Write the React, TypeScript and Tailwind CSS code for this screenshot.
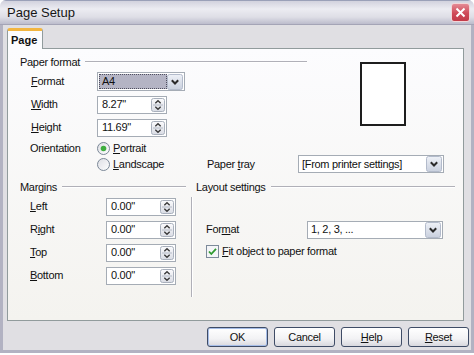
import React from "react";

const Spin = () => (
  <svg width="14" height="14" viewBox="0 0 14 14" className="shrink-0">
    <defs>
      <linearGradient id="spg" x1="0" y1="0" x2="0" y2="1">
        <stop offset="0" stopColor="#fbfbfd" />
        <stop offset="1" stopColor="#d9dce4" />
      </linearGradient>
    </defs>
    <rect x="0.5" y="0.5" width="13" height="13" rx="2" fill="url(#spg)" stroke="#a9b0bc" />
    <line x1="2" y1="7" x2="12" y2="7" stroke="#b4bac6" />
    <path d="M4.3 5.2 L7 2.8 L9.7 5.2" fill="none" stroke="#3a3a3a" strokeWidth="1.4" />
    <path d="M4.3 8.8 L7 11.2 L9.7 8.8" fill="none" stroke="#3a3a3a" strokeWidth="1.4" />
  </svg>
);

const Arrow = () => (
  <svg width="16" height="16" viewBox="0 0 16 16" className="shrink-0">
    <defs>
      <linearGradient id="arg" x1="0" y1="0" x2="0" y2="1">
        <stop offset="0" stopColor="#eef1f7" />
        <stop offset="1" stopColor="#c9d0de" />
      </linearGradient>
    </defs>
    <rect x="0.5" y="0.5" width="15" height="15" rx="2" fill="url(#arg)" stroke="#b3bbcb" />
    <path d="M4.8 6.3 L8 9.5 L11.2 6.3" fill="none" stroke="#2a2a2a" strokeWidth="2" />
  </svg>
);

const U = ({ children }: { children: React.ReactNode }) => <span className="underline underline-offset-[1px]">{children}</span>;

const Field = ({ value, w }: { value: string; w: string }) => (
  <div className={`${w} h-[18px] bg-white border border-[#a5acb5] flex items-center pl-[4px] pr-[1px]`}>
    <span className="flex-1">{value}</span>
    <Spin />
  </div>
);

const Combo = ({ value, w }: { value: string; w: string }) => (
  <div className={`${w} h-[18px] bg-white border border-[#a5acb5] flex items-center pl-[3px] pr-px`}>
    <span className="flex-1">{value}</span>
    <Arrow />
  </div>
);

const Header = ({ text }: { text: string }) => (
  <div className="h-[14px] flex items-center gap-[5px]">
    <span>{text}</span>
    <div className="flex-1 h-[2px] border-t border-[#b0b0b8] border-b border-b-white" />
  </div>
);

const Radio = ({ on }: { on?: boolean }) => (
  <svg width="13" height="13" viewBox="0 0 13 13" className="shrink-0">
    <defs>
      <linearGradient id="rdg" x1="0" y1="0" x2="1" y2="1">
        <stop offset="0" stopColor="#dcdde3" />
        <stop offset="1" stopColor="#ffffff" />
      </linearGradient>
    </defs>
    <circle cx="6.5" cy="6.5" r="6" fill="url(#rdg)" stroke="#7b8797" />
    {on && <circle cx="6.5" cy="6.5" r="2.8" fill="#3fae3f" />}
  </svg>
);

const Btn = ({ children, def }: { children: React.ReactNode; def?: boolean }) => (
  <div
    className={`w-[61px] h-[20px] rounded-[3px] border border-[#3f4c66] flex items-center justify-center bg-[linear-gradient(to_bottom,#ffffff_0%,#f2f2f4_60%,#d8d8de_100%)] ${
      def ? "shadow-[inset_0_0_0_1px_#a6bde8]" : ""
    }`}
  >
    {children}
  </div>
);

export default function App() {
  return (
    <div className="w-[474px] h-[355px] bg-white font-['Liberation_Sans',Arial,sans-serif] text-[11px] tracking-[-0.3px] text-[#111] leading-none">
      <div className="h-[353px] flex flex-col rounded-t-[6px] overflow-hidden">
        <div className="h-[25px] shrink-0 flex items-center justify-between pl-[7px] pr-[4px] border-t border-[#9aa0b8] border-b border-b-[#a4a4b6] bg-[linear-gradient(to_bottom,#d2d2de_0%,#ececf2_35%,#dedee6_70%,#bcbccc_100%)]">
          <span className="text-[13px] tracking-normal text-[#161616]">Page Setup</span>
          <div className="w-[19px] h-[19px] rounded-[3px] border border-[#f2d6d8] bg-[linear-gradient(to_bottom,#e48a94_0%,#cf4a58_55%,#c23a48_100%)] flex items-center justify-center">
            <svg width="11" height="11" viewBox="0 0 11 11">
              <path d="M1.5 1.5 L9.5 9.5 M9.5 1.5 L1.5 9.5" stroke="#fff" strokeWidth="2" />
            </svg>
          </div>
        </div>
        <div className="flex-1 flex flex-col bg-[#e0dfe3] border-x-[3px] border-b-[3px] border-[#b2b2c2]">
          <div className="pl-[4px] pt-[3px] flex">
            <div className="relative z-10 -mb-px w-[36px] h-[21px] bg-[#fcfcfe] border-x border-[#919b9c] rounded-t-[3px] border-t-[3px] border-t-[#f2b540] flex items-center pl-[3px] font-bold tracking-normal">
              Page
            </div>
          </div>
          <div className="ml-[4px] w-[457px] h-[273px] border border-[#919b9c] bg-[linear-gradient(to_bottom,#fcfcfe_0%,#f4f3ef_100%)] pl-[12px] pt-[6px] flex flex-col">
            <div className="flex">
              <div className="w-[287px] flex flex-col">
                <Header text="Paper format" />
                <div className="mt-px h-[23px] flex items-center">
                  <span className="w-[77px] pl-[11px]"><U>F</U>ormat</span>
                  <div className="w-[88px] h-[19px] bg-white border border-[#a5acb5] flex items-center p-px">
                    <div className="flex-1 h-full bg-[#b4b4c4] border border-dotted border-[#505060] flex items-center pl-[2px]">A4</div>
                    <Arrow />
                  </div>
                </div>
                <div className="h-[23px] flex items-center">
                  <span className="w-[77px] pl-[11px]"><U>W</U>idth</span>
                  <Field value={'8.27"'} w="w-[70px]" />
                </div>
                <div className="h-[23px] flex items-center">
                  <span className="w-[77px] pl-[11px]"><U>H</U>eight</span>
                  <Field value={'11.69"'} w="w-[70px]" />
                </div>
              </div>
              <div className="ml-[53px] mt-[7px] w-[46px] h-[64px] border-2 border-[#1e1e1e] bg-white" />
            </div>
            <div className="mt-px h-[16px] flex items-center">
              <span className="w-[77px] pl-[10px]">Orientation</span>
              <Radio on />
              <span className="ml-[3px]"><U>P</U>ortrait</span>
            </div>
            <div className="h-[16px] flex items-center">
              <span className="w-[77px]" />
              <div className="w-[110px] flex items-center">
                <Radio />
                <span className="ml-[3px]"><U>L</U>andscape</span>
              </div>
              <span className="w-[91px]">Paper <U>t</U>ray</span>
              <Combo value="[From printer settings]" w="w-[146px]" />
            </div>
            <div className="mt-[8px] flex">
              <div className="w-[166px] flex flex-col">
                <Header text="Margins" />
                <div className="mt-px h-[23px] flex items-center">
                  <span className="w-[86px] pl-[10px]"><U>L</U>eft</span>
                  <Field value={'0.00"'} w="w-[70px]" />
                </div>
                <div className="h-[23px] flex items-center">
                  <span className="w-[86px] pl-[10px]">R<U>i</U>ght</span>
                  <Field value={'0.00"'} w="w-[70px]" />
                </div>
                <div className="h-[23px] flex items-center">
                  <span className="w-[86px] pl-[10px]"><U>T</U>op</span>
                  <Field value={'0.00"'} w="w-[70px]" />
                </div>
                <div className="h-[23px] flex items-center">
                  <span className="w-[86px] pl-[10px]"><U>B</U>ottom</span>
                  <Field value={'0.00"'} w="w-[70px]" />
                </div>
              </div>
              <div className="ml-[5px] mt-[17px] w-[2px] h-[100px] border-l border-[#b0b0b8] border-r border-r-white" />
              <div className="ml-[3px] w-[259px] flex flex-col">
                <Header text="Layout settings" />
                <div className="mt-[24px] h-[23px] flex items-center">
                  <span className="w-[111px] pl-[10px]">For<U>m</U>at</span>
                  <Combo value="1, 2, 3, ..." w="w-[136px]" />
                </div>
                <div className="mt-[2px] h-[16px] flex items-center pl-[10px]">
                  <svg width="13" height="13" viewBox="0 0 13 13" className="shrink-0">
                    <rect x="0.5" y="0.5" width="12" height="12" fill="#f4f5f7" stroke="#7d8a9a" />
                    <path d="M3 6.5 L5.3 9 L10 3.8" fill="none" stroke="#2f9a2f" strokeWidth="1.8" />
                  </svg>
                  <span className="ml-[3px]"><U>F</U>it object to paper format</span>
                </div>
              </div>
            </div>
          </div>
          <div className="mt-[6px] pr-[2px] flex justify-end gap-[6px]">
            <Btn def>OK</Btn>
            <Btn>Cancel</Btn>
            <Btn><U>H</U>elp</Btn>
            <Btn><U>R</U>eset</Btn>
          </div>
        </div>
      </div>
    </div>
  );
}
